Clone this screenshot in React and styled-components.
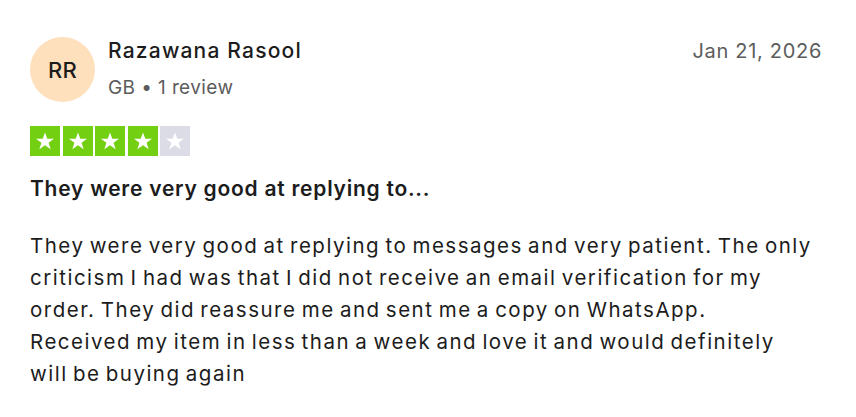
import React from "react";
import styled, { createGlobalStyle } from "styled-components";

const GlobalStyle = createGlobalStyle`
  body {
    margin: 0;
    background: #ffffff;
    font-family: Inter, "Noto Sans", sans-serif;
    color: #1c1c1c;
  }
`;

const review = {
  initials: "RR",
  name: "Razawana Rasool",
  country: "GB",
  reviews: 1,
  date: "Jan 21, 2026",
  rating: 4,
  title: "They were very good at replying to...",
  lines: [
    "They were very good at replying to messages and very patient. The only",
    "criticism I had was that I did not receive an email verification for my",
    "order. They did reassure me and sent me a copy on WhatsApp.",
    "Received my item in less than a week and love it and would definitely",
    "will be buying again",
  ],
};

function Star() {
  return (
    <svg width="20" height="20" viewBox="0 0 24 24">
      <path
        fill="#ffffff"
        d="M12 1.8l2.75 7.6h8.05l-6.5 4.8 2.5 7.7L12 17.1l-6.8 4.8 2.5-7.7-6.5-4.8h8.05z"
      />
    </svg>
  );
}

export default function App() {
  const { initials, name, country, reviews, date, rating, title, lines } = review;

  return (
    <>
      <GlobalStyle />
      <Card>
        <Header>
          <Consumer>
            <Avatar>{initials}</Avatar>
            <Info>
              <Name>{name}</Name>
              <Meta>
                {country} • {reviews} review
              </Meta>
            </Info>
          </Consumer>
          <DateText>{date}</DateText>
        </Header>
        <Stars>
          {[1, 2, 3, 4, 5].map((n) => (
            <StarBox key={n} $filled={n <= rating}>
              <Star />
            </StarBox>
          ))}
        </Stars>
        <Title>{title}</Title>
        <Body>
          {lines.map((line, i) => (
            <React.Fragment key={i}>
              {line}
              {i < lines.length - 1 && <br />}
            </React.Fragment>
          ))}
        </Body>
      </Card>
    </>
  );
}

const Card = styled.div`
  padding: 37px 34px 20px 30px;
  display: flex;
  flex-direction: column;
`;

const Header = styled.div`
  display: flex;
  justify-content: space-between;
  align-items: flex-start;
`;

const Consumer = styled.div`
  display: flex;
  align-items: flex-start;
  gap: 13px;
`;

const Avatar = styled.div`
  width: 65px;
  height: 65px;
  border-radius: 50%;
  background-color: #ffe0bd;
  display: flex;
  align-items: center;
  justify-content: center;
  font-size: 22px;
  font-weight: 500;
  color: #1c1c1c;
  letter-spacing: 0.3px;
`;

const Info = styled.div`
  display: flex;
  flex-direction: column;
`;

const Name = styled.div`
  font-size: 21px;
  font-weight: 500;
  line-height: 28px;
  color: #1c1c1c;
  letter-spacing: 1.2px;
`;

const Meta = styled.div`
  font-size: 19px;
  line-height: 26px;
  margin-top: 10px;
  color: #5c5c5c;
  letter-spacing: 0.4px;
`;

const DateText = styled.div`
  font-size: 20px;
  line-height: 28px;
  color: #5c5c5c;
  letter-spacing: 0.7px;
`;

const Stars = styled.div`
  display: flex;
  gap: 2.5px;
  margin-top: 24px;
`;

const StarBox = styled.div`
  width: 30px;
  height: 30px;
  background-color: ${(props) => (props.$filled ? "#73cf11" : "#dcdce6")};
  display: flex;
  align-items: center;
  justify-content: center;
`;

const Title = styled.h2`
  margin: 19px 0 0 0;
  font-size: 21px;
  font-weight: 600;
  line-height: 28px;
  color: #1c1c1c;
  letter-spacing: 0.75px;
`;

const Body = styled.p`
  margin: 27px 0 0 0;
  font-size: 20.5px;
  line-height: 32px;
  color: #1c1c1c;
  letter-spacing: 1.5px;
  word-spacing: -2px;
  white-space: nowrap;
`;
